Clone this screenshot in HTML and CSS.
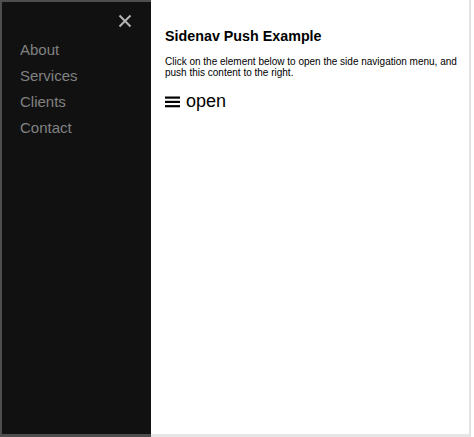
FILE: index.html
```html
<!DOCTYPE html>
<html>
<head>
<meta charset="utf-8">
<title>Sidenav Push Example</title>
<link rel="stylesheet" href="styles.css">
</head>
<body>
<div class="frame">
  <nav class="sidenav">
    <a class="closebtn" href="#" aria-label="Close">
      <svg width="14" height="14" viewBox="0 0 14 14"><path d="M1.5 1.5 L12.5 12.5 M12.5 1.5 L1.5 12.5" stroke="#b4b4b4" stroke-width="2" stroke-linecap="butt" fill="none"/></svg>
    </a>
    <a class="navlink" href="#">About</a>
    <a class="navlink" href="#">Services</a>
    <a class="navlink" href="#">Clients</a>
    <a class="navlink" href="#">Contact</a>
  </nav>
  <main class="main">
    <h2 class="title">Sidenav Push Example</h2>
    <p class="desc">Click on the element below to open the side navigation menu, and push this content to the right.</p>
    <span class="opener"><svg class="burger" width="15" height="12" viewBox="0 0 15 12"><rect x="0" y="0.5" width="15" height="2.2" fill="#000"/><rect x="0" y="4.8" width="15" height="2.2" fill="#000"/><rect x="0" y="9.1" width="15" height="2.2" fill="#000"/></svg>open</span>
  </main>
</div>
</body>
</html>
```

FILE: styles.css
```css
html, body {
  margin: 0;
  padding: 0;
  background: #fff;
}

.frame {
  display: flex;
  width: 471px;
  height: 437px;
  font-family: "Liberation Sans", Arial, sans-serif;
}

.sidenav {
  position: relative;
  box-sizing: border-box;
  width: 151px;
  height: 437px;
  background: #111;
  border-top: 2px solid #4e4e4e;
  border-left: 2px solid #4e4e4e;
  border-bottom: 3px solid #4e4e4e;
  padding-top: 35px;
  padding-left: 18px;
  display: flex;
  flex-direction: column;
}

.navlink {
  display: block;
  font-size: 15px;
  line-height: 26px;
  color: #818181;
  text-decoration: none;
}

.closebtn {
  position: absolute;
  left: 116px;
  top: 12px;
  width: 14px;
  height: 14px;
  display: block;
}

.closebtn svg {
  display: block;
}

.main {
  flex: 1;
  box-sizing: border-box;
  height: 437px;
  border-right: 2px solid #e2e2e2;
  border-bottom: 3px solid #e6e6e6;
  padding-top: 28px;
  padding-left: 14px;
  display: flex;
  flex-direction: column;
  align-items: flex-start;
}

.title {
  margin: 0;
  font-size: 14.3px;
  line-height: 17px;
  font-weight: bold;
  color: #000;
}

.desc {
  margin: 11px 0 0 0;
  font-size: 10px;
  line-height: 11px;
  color: #000;
  width: 300px;
}

.opener {
  margin-top: 11.5px;
  display: flex;
  align-items: center;
  font-size: 18px;
  line-height: 22px;
  color: #000;
}

.burger {
  display: block;
  margin-right: 6px;
  margin-top: 2px;
}
```
